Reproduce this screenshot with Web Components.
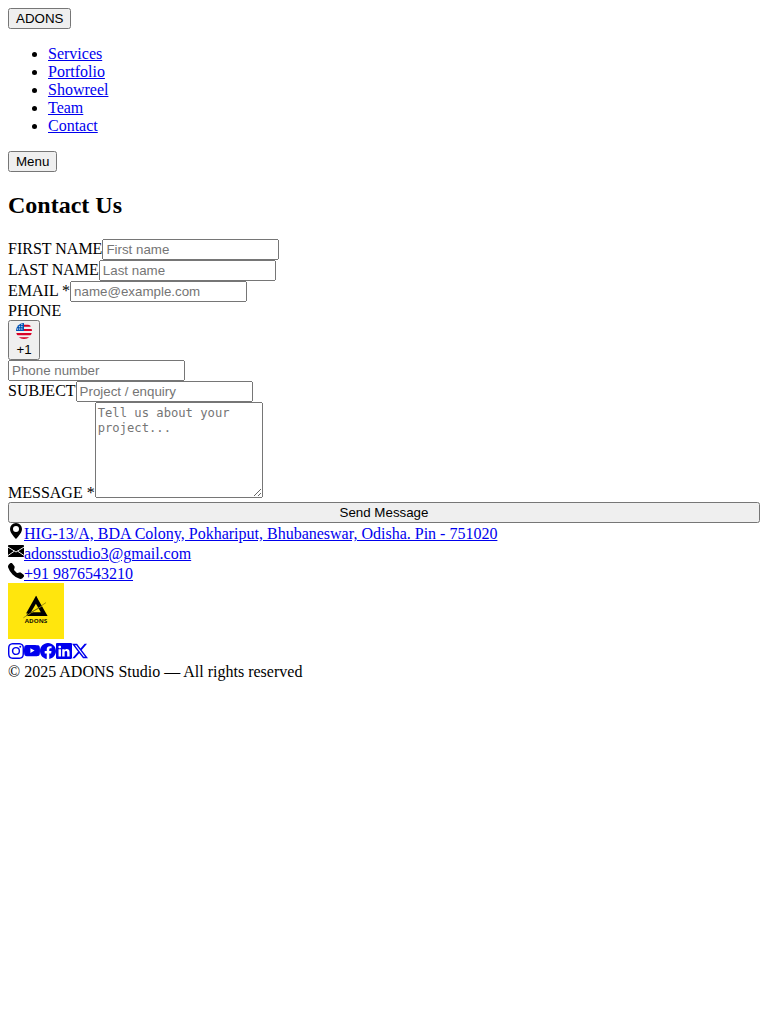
<!DOCTYPE html>
<html lang="en">
<head>
<meta charset="utf-8">
<title>ADONS Studio</title>
<style>
body { margin: 8px; font: 16px "Liberation Serif", "Times New Roman", serif; color: #000; background: #fff; }
</style>
</head>
<body>
<site-nav></site-nav>
<contact-form></contact-form>
<site-footer></site-footer>
<script>
const controls = `
  :host { display: block; }
  button, input { font: 13.3333px "Liberation Sans", Arial, sans-serif; box-sizing: border-box; }
  a { color: #0000ee; text-decoration: underline; }
`;

const icons = {
  pin: '<path d="M8 16s6-5.686 6-10A6 6 0 0 0 2 6c0 4.314 6 10 6 10m0-7a3 3 0 1 1 0-6 3 3 0 0 1 0 6"/>',
  mail: '<rect y="2" width="16" height="12" rx=".8"/><path fill="none" stroke="#fff" stroke-width=".95" d="M0 4.1 8 9 16 4.1M0 12.5 6.3 8.2M16 12.5 9.7 8.2"/>',
  phone: '<path fill-rule="evenodd" d="M1.885.511a1.745 1.745 0 0 1 2.61.163L6.29 2.98c.329.423.445.974.315 1.494l-.547 2.19a.68.68 0 0 0 .178.643l2.457 2.457a.68.68 0 0 0 .644.178l2.189-.547a1.75 1.75 0 0 1 1.494.315l2.306 1.794c.829.645.905 1.87.163 2.611l-1.034 1.034c-.74.74-1.846 1.065-2.877.702a18.6 18.6 0 0 1-7.01-4.42 18.6 18.6 0 0 1-4.42-7.009c-.362-1.03-.037-2.137.703-2.877z"/>',
  instagram: '<path d="M8 0C5.829 0 5.556.01 4.703.048 3.85.088 3.269.222 2.76.42a3.9 3.9 0 0 0-1.417.923A3.9 3.9 0 0 0 .42 2.76C.222 3.268.087 3.85.048 4.7.01 5.555 0 5.827 0 8.001c0 2.172.01 2.444.048 3.297.04.852.174 1.433.372 1.942.205.526.478.972.923 1.417.444.445.89.719 1.416.923.51.198 1.09.333 1.942.372C5.555 15.99 5.827 16 8 16s2.444-.01 3.298-.048c.851-.04 1.434-.174 1.943-.372a3.9 3.9 0 0 0 1.416-.923c.445-.445.718-.891.923-1.417.197-.509.332-1.09.372-1.942C15.99 10.445 16 10.173 16 8s-.01-2.445-.048-3.299c-.04-.851-.175-1.433-.372-1.941a3.9 3.9 0 0 0-.923-1.417A3.9 3.9 0 0 0 13.24.42c-.51-.198-1.092-.333-1.943-.372C10.443.01 10.172 0 7.998 0zm-.717 1.442h.718c2.136 0 2.389.007 3.232.046.78.035 1.204.166 1.486.275.373.145.64.319.92.599s.453.546.598.92c.11.281.24.705.275 1.485.039.843.047 1.096.047 3.231s-.008 2.389-.047 3.232c-.035.78-.166 1.203-.275 1.485a2.5 2.5 0 0 1-.599.919c-.28.28-.546.453-.92.598-.28.11-.704.24-1.485.276-.843.038-1.096.047-3.232.047s-2.39-.009-3.233-.047c-.78-.036-1.203-.166-1.485-.276a2.5 2.5 0 0 1-.92-.598 2.5 2.5 0 0 1-.6-.92c-.109-.281-.24-.705-.275-1.485-.038-.843-.046-1.096-.046-3.233s.008-2.388.046-3.231c.036-.78.166-1.204.276-1.486.145-.373.319-.64.599-.92s.546-.453.92-.598c.282-.11.705-.24 1.485-.276.738-.034 1.024-.044 2.515-.045zm4.988 1.328a.96.96 0 1 0 0 1.92.96.96 0 0 0 0-1.92m-4.27 1.122a4.109 4.109 0 1 0 0 8.217 4.109 4.109 0 0 0 0-8.217m0 1.441a2.667 2.667 0 1 1 0 5.334 2.667 2.667 0 0 1 0-5.334"/>',
  youtube: '<path d="M8.051 1.999h.089c.822.003 4.987.033 6.11.335a2.01 2.01 0 0 1 1.415 1.42c.101.38.172.883.22 1.402l.01.104.022.26.008.104c.065.914.073 1.77.074 1.957v.075c-.001.194-.01 1.108-.082 2.06l-.008.105-.009.104c-.05.572-.124 1.14-.235 1.558a2.01 2.01 0 0 1-1.415 1.42c-1.16.312-5.569.334-6.18.335h-.142c-.309 0-1.587-.006-2.927-.052l-.17-.006-.087-.004-.171-.007-.171-.007c-1.11-.049-2.167-.128-2.654-.26a2.01 2.01 0 0 1-1.415-1.419c-.111-.417-.185-.986-.235-1.558L.09 9.82l-.008-.104A31 31 0 0 1 0 7.68v-.123c.002-.215.01-.958.064-1.778l.007-.103.003-.052.008-.104.022-.26.01-.104c.048-.519.119-1.023.22-1.402a2.01 2.01 0 0 1 1.415-1.42c.487-.13 1.544-.21 2.654-.26l.17-.007.172-.006.086-.003.171-.007A100 100 0 0 1 7.858 2zM6.4 5.209v4.818l4.157-2.408z"/>',
  facebook: '<path d="M16 8.049c0-4.446-3.582-8.05-8-8.05C3.58 0-.002 3.603-.002 8.05c0 4.017 2.926 7.347 6.75 7.951v-5.625h-2.03V8.05H6.75V6.275c0-2.017 1.195-3.131 3.022-3.131.876 0 1.791.157 1.791.157v1.98h-1.009c-.993 0-1.303.621-1.303 1.258v1.51h2.218l-.354 2.326H9.25V16c3.824-.604 6.75-3.934 6.75-7.951"/>',
  linkedin: '<path d="M0 1.146C0 .513.526 0 1.175 0h13.65C15.474 0 16 .513 16 1.146v13.708c0 .633-.526 1.146-1.175 1.146H1.175C.526 16 0 15.487 0 14.854zm4.943 12.248V6.169H2.542v7.225zm-1.2-8.212c.837 0 1.358-.554 1.358-1.248-.015-.709-.52-1.248-1.342-1.248S2.4 3.226 2.4 3.934c0 .694.521 1.248 1.327 1.248zm4.908 8.212V9.359c0-.216.016-.432.08-.586.173-.431.568-.878 1.232-.878.869 0 1.216.662 1.216 1.634v3.865h2.401V9.25c0-2.22-1.184-3.252-2.764-3.252-1.274 0-1.845.7-2.165 1.193v.025h-.016l.016-.025V6.169h-2.4c.03.678 0 7.225 0 7.225z"/>',
  x: '<path d="M12.6.75h2.454l-5.36 6.142L16 15.25h-4.937l-3.867-5.07-4.425 5.07H.316l5.733-6.57L0 .75h5.063l3.495 4.633L12.601.75Zm-.86 13.028h1.36L4.323 2.145H2.865z"/>'
};

customElements.define('ui-icon', class extends HTMLElement {
  constructor() {
    super();
    this.attachShadow({ mode: 'open' });
  }
  connectedCallback() {
    this.shadowRoot.innerHTML = `<style>:host { display: inline; } svg { width: 16px; height: 16px; }</style><svg viewBox="0 0 16 16" fill="currentColor" aria-hidden="true">${icons[this.getAttribute('name')]}</svg>`;
  }
});

customElements.define('us-flag', class extends HTMLElement {
  constructor() {
    super();
    this.attachShadow({ mode: 'open' }).innerHTML = `
      <style>:host { display: inline; } svg { width: 16px; height: 16px; }</style>
      <svg viewBox="0 0 512 512" aria-hidden="true">
        <defs><clipPath id="round"><circle cx="256" cy="256" r="256"/></clipPath></defs>
        <g clip-path="url(#round)">
          <path fill="#f0f0f0" d="M0 0h512v512H0z"/>
          <path fill="#d80027" d="M244 256h268v-67H244zM244 122h268V56H244zM0 389h512v-66H0zM0 512h512v-56H0z"/>
          <path fill="#0052b4" d="M0 0h256v256H0z"/>
          <path fill="#f0f0f0" d="M187 8l8 24h25l-20 15 7 24-20-15-20 15 8-24-21-15h25zM112 82l8 24h25l-20 15 7 24-20-15-20 15 8-24-21-15h25zM187 82l8 24h25l-20 15 7 24-20-15-20 15 8-24-21-15h25zM50 157l8 24h25l-20 15 7 24-20-15-20 15 8-24-21-15h25zM118 157l8 24h25l-20 15 7 24-20-15-20 15 8-24-21-15h25zM187 157l8 24h25l-20 15 7 24-20-15-20 15 8-24-21-15h25z"/>
        </g>
      </svg>`;
  }
});

customElements.define('adons-logo', class extends HTMLElement {
  constructor() {
    super();
    this.attachShadow({ mode: 'open' }).innerHTML = `
      <style>:host { display: inline; } svg { width: 56px; height: 56px; }</style>
      <svg viewBox="0 0 56 56" role="img" aria-label="ADONS">
        <path fill="#ffe60d" d="M0 0h56v56H0z"/>
        <path d="M28 12.8 39.6 33H18l9.8-16.6zM27.9 20.8 23 29.3h9.8z" fill-rule="evenodd"/>
        <path stroke="#ffe60d" stroke-width=".8" d="M16.5 34 37 21"/>
        <path stroke="#171502" stroke-width=".4" d="M15.4 34.8 38 19.6M22 30l12-6.5"/>
        <path d="M28 12.8 18 30.5l2.8-.6 8.6-14.6z"/>
        <text x="28" y="39.7" text-anchor="middle" textLength="22.4" lengthAdjust="spacingAndGlyphs" font-family="Open Sans, sans-serif" font-size="5.5" font-weight="700" fill="#171502">ADONS</text>
      </svg>`;
  }
});

customElements.define('site-nav', class extends HTMLElement {
  constructor() {
    super();
    this.attachShadow({ mode: 'open' }).innerHTML = `
      <style>${controls} div { display: flex; } ul { margin: 16px 0; padding-left: 40px; }</style>
      <nav>
        <div><button>ADONS</button></div>
        <ul>
          <li><a href="#services">Services</a></li>
          <li><a href="#portfolio">Portfolio</a></li>
          <li><a href="#showreel">Showreel</a></li>
          <li><a href="#team">Team</a></li>
          <li><a href="#contact">Contact</a></li>
        </ul>
        <div><button>Menu</button></div>
      </nav>`;
  }
});

customElements.define('form-row', class extends HTMLElement {
  constructor() {
    super();
    this.attachShadow({ mode: 'open' }).innerHTML = `<style>:host { display: block; }</style><label><slot name="label"></slot></label><slot></slot>`;
  }
});

customElements.define('contact-form', class extends HTMLElement {
  constructor() {
    super();
    this.attachShadow({ mode: 'open' }).innerHTML = `
      <style>
        ${controls}
        h2 { font-size: 24px; margin: 19.92px 0; }
        input { width: 177px; height: 21px; }
        .phone { display: flex; flex-direction: column; align-items: flex-start; }
        textarea { box-sizing: border-box; width: 168px; height: 96px; padding: 3px 2px 2px; font: 12.18px/15px "DejaVu Sans Mono", monospace; }
        .send { display: block; width: 100%; }
      </style>
      <h2>Contact Us</h2>
      <form>
        <form-row><span slot="label">FIRST NAME</span><input placeholder="First name"></form-row>
        <form-row><span slot="label">LAST NAME</span><input placeholder="Last name"></form-row>
        <form-row><span slot="label">EMAIL *</span><input type="email" placeholder="name@example.com"></form-row>
        <form-row><span slot="label">PHONE</span></form-row>
        <div class="phone">
          <button type="button"><us-flag></us-flag><br>+1</button>
          <input type="tel" placeholder="Phone number">
        </div>
        <form-row><span slot="label">SUBJECT</span><input placeholder="Project / enquiry"></form-row>
        <form-row><span slot="label">MESSAGE *</span><textarea placeholder="Tell us about your project..."></textarea></form-row>
        <button class="send" type="button">Send Message</button>
      </form>`;
  }
});

customElements.define('site-footer', class extends HTMLElement {
  constructor() {
    super();
    this.attachShadow({ mode: 'open' }).innerHTML = `
      <style>${controls}</style>
      <footer>
        <div><ui-icon name="pin"></ui-icon><a href="#map">HIG-13/A, BDA Colony, Pokhariput, Bhubaneswar, Odisha. Pin - 751020</a></div>
        <div><ui-icon name="mail"></ui-icon><a href="#mail">adonsstudio3@gmail.com</a></div>
        <div><ui-icon name="phone"></ui-icon><a href="#call">+91 9876543210</a></div>
        <div><adons-logo></adons-logo></div>
        <div><a href="#instagram"><ui-icon name="instagram"></ui-icon></a><a href="#youtube"><ui-icon name="youtube"></ui-icon></a><a href="#facebook"><ui-icon name="facebook"></ui-icon></a><a href="#linkedin"><ui-icon name="linkedin"></ui-icon></a><a href="#x"><ui-icon name="x"></ui-icon></a></div>
        <div>© 2025 ADONS Studio — All rights reserved</div>
      </footer>`;
  }
});
</script>
</body>
</html>
